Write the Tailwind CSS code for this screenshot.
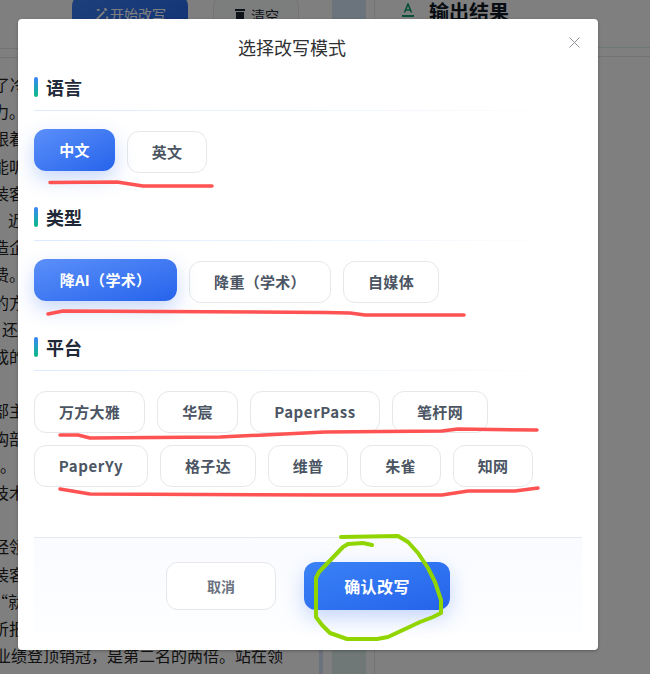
<!DOCTYPE html>
<html lang="zh-CN">
<head>
  <meta charset="UTF-8">
  <meta name="viewport" content="width=device-width, initial-scale=1.0">
  <title>选择改写模式</title>
  <script src="https://cdn.jsdelivr.net/npm/@tailwindcss/browser@4"></script>
</head>
<body class="font-['Noto_Sans_CJK_SC','Noto_Sans',sans-serif]">
  <div class="relative w-[650px] h-[674px] overflow-hidden bg-white flex">

    <!-- Page behind the dialog -->
    <div class="w-[319px] shrink-0 flex flex-col">
      <div class="h-[55px] border-b border-[#e5e7eb] flex items-start gap-[25px] pl-[72px] -mt-[6px] shrink-0">
        <div class="w-[116px] h-[50px] pt-[10px] rounded-[12px] bg-linear-to-br from-[#3b82f6] to-[#2563eb] text-white text-[14px] leading-[20px] flex items-start justify-center gap-[1px] shrink-0">
          <svg class="w-[15px] h-[15px] mt-[3px]" viewBox="0 0 16 16" fill="none" stroke="currentColor" stroke-width="2"><path d="M2 14 11 5M12 1v3M14 3h-3M3 3h3M14 10v3"/></svg>
          <span>开始改写</span>
        </div>
        <div class="w-[86px] h-[50px] pt-[10px] rounded-[12px] border border-[#e5e7eb] bg-[#f9fafb] text-[#1f2937] text-[14px] leading-[20px] flex items-start justify-center gap-[4px] shrink-0">
          <svg class="w-[14px] h-[15px] mt-[3px]" viewBox="0 0 14 15" fill="currentColor"><path d="M2 1h10v2H2zM3 4h8v11H3z"/></svg>
          <span>清空</span>
        </div>
      </div>
      <div class="mt-[8px] h-px bg-[#e5e7eb] shrink-0"></div>
      <div class="pt-[13px] text-[16px] leading-[27.2px] text-[#222] whitespace-nowrap">
        <p class="-ml-[6px]">了冷</p>
        <p class="-ml-[7px]">力。</p>
        <p class="-ml-[7px]">跟着</p>
        <p class="-ml-[7px]">能听</p>
        <p class="-ml-[7px]">装客</p>
        <p class="ml-[8px]">近</p>
        <p class="-ml-[7px]">造企</p>
        <p class="-ml-[7px]">费。</p>
        <p class="-ml-[7px]">的方</p>
        <p class="ml-[2px]">还</p>
        <p class="-ml-[7px]">成的</p>
        <p class="h-[27.2px]"></p>
        <p class="-ml-[7px]">部主</p>
        <p class="-ml-[7px]">构部</p>
        <p class="ml-0">。</p>
        <p class="-ml-[7px]">技术</p>
        <p class="h-[27.2px]"></p>
        <p class="-ml-[7px]">经领</p>
        <p class="-ml-[7px]">装客</p>
        <p class="-ml-[8px]">“就</p>
        <p class="-ml-[7px]">析报</p>
        <p class="-ml-[5px]">业绩登顶销冠，是第二名的两倍。站在领</p>
      </div>
    </div>
    <div class="w-[4px] h-full flex items-end shrink-0"><div class="w-full h-[60px] bg-[#d6e4fb]"></div></div>
    <div class="w-[9px] shrink-0"></div>
    <div class="w-[34px] shrink-0 h-full bg-linear-to-b from-[#d6e6f8] to-[#dff0ec]"></div>
    <div class="w-[9px] shrink-0 border-r border-[#e5e7eb]"></div>
    <div class="flex-1 flex flex-col">
      <div class="h-[48px] pl-[27px] flex items-start gap-[15px] border-b border-[#dff0ec] shrink-0">
        <svg class="w-[12px] h-[14px] mt-[3px] text-[#0f9f6e]" viewBox="0 0 12 14" fill="none" stroke="currentColor" stroke-width="1.6"><path d="M2.5 9.5 6 1l3.500 8.500M3.500 7h5"/><path d="M0 13h12" stroke-width="2"/></svg>
        <span class="text-[20px] leading-[24px] font-bold text-[#111827]">输出结果</span>
      </div>
      <div class="mt-[8px] h-px bg-[#e5e7eb]"></div>
    </div>

    <!-- Overlay -->
    <div class="absolute inset-0 bg-black/50"></div>

    <!-- Dialog -->
    <div class="absolute left-[18px] top-[19px] w-[580px] h-[631px] bg-white rounded-[4px] shadow-[0_1px_3px_rgba(0,0,0,0.3)] flex flex-col">
      <div class="h-[58px] shrink-0 flex justify-center pt-[16px] pr-[32px] text-[18px] leading-[24px] text-[#303133]">选择改写模式</div>
      <button class="absolute right-[18px] top-[18px] w-[11px] h-[11px]">
        <svg class="w-[11px] h-[11px] block" viewBox="0 0 11 11" fill="none" stroke="#909399" stroke-width="1"><path d="M0.500 0.500 10.500 10.500M10.500 0.500 0.500 10.500"/></svg>
      </button>

      <div class="px-[16px] flex flex-col">
        <!-- 语言 -->
        <div class="h-5 flex items-center gap-2">
          <span class="w-1 h-5 rounded-full bg-linear-to-b from-[#3b82f6] to-[#10b981]"></span>
          <h3 class="text-[18px] font-bold text-[#1f2937] leading-5">语言</h3>
        </div>
        <div class="mt-[13px] h-px w-full bg-linear-to-r from-[#dbeafe] to-transparent"></div>
        <div class="mt-5 flex gap-3 mb-[34px]">
          <button class="h-[42px] w-[81px] -translate-y-[2px] rounded-[12px] bg-linear-to-br from-[#5b8ff9] to-[#2563eb] text-white text-[15px] tracking-[0.3px] font-bold shadow-[0_8px_20px_rgba(37,99,235,0.25)]">中文</button>
          <button class="h-[42px] w-[80px] rounded-[12px] border border-[#e5e7eb] bg-white text-[#4b5563] text-[15px] tracking-[0.3px] font-bold">英文</button>
        </div>

        <!-- 类型 -->
        <div class="h-5 flex items-center gap-2">
          <span class="w-1 h-5 rounded-full bg-linear-to-b from-[#3b82f6] to-[#10b981]"></span>
          <h3 class="text-[18px] font-bold text-[#1f2937] leading-5">类型</h3>
        </div>
        <div class="mt-[13px] h-px w-full bg-linear-to-r from-[#dbeafe] to-transparent"></div>
        <div class="mt-5 flex gap-3 mb-[34px]">
          <button class="h-[42px] w-[143px] -translate-y-[2px] rounded-[12px] bg-linear-to-br from-[#5b8ff9] to-[#2563eb] text-white text-[15px] tracking-[0.3px] font-bold shadow-[0_8px_20px_rgba(37,99,235,0.25)]">降AI（学术）</button>
          <button class="h-[42px] w-[142px] rounded-[12px] border border-[#e5e7eb] bg-white text-[#4b5563] text-[15px] tracking-[0.3px] font-bold">降重（学术）</button>
          <button class="h-[42px] w-[96px] rounded-[12px] border border-[#e5e7eb] bg-white text-[#4b5563] text-[15px] tracking-[0.3px] font-bold">自媒体</button>
        </div>

        <!-- 平台 -->
        <div class="h-5 flex items-center gap-2">
          <span class="w-1 h-5 rounded-full bg-linear-to-b from-[#3b82f6] to-[#10b981]"></span>
          <h3 class="text-[18px] font-bold text-[#1f2937] leading-5">平台</h3>
        </div>
        <div class="mt-[13px] h-px w-full bg-linear-to-r from-[#dbeafe] to-transparent"></div>
        <div class="mt-5 mb-[50px] flex flex-col gap-3">
          <div class="flex gap-3">
            <button class="h-[42px] w-[111px] rounded-[12px] border border-[#e5e7eb] bg-white text-[#4b5563] text-[15px] tracking-[0.3px] font-bold">万方大雅</button>
            <button class="h-[42px] w-[81px] rounded-[12px] border border-[#e5e7eb] bg-white text-[#4b5563] text-[15px] tracking-[0.3px] font-bold">华宸</button>
            <button class="h-[42px] w-[130px] rounded-[12px] border border-[#e5e7eb] bg-white text-[#4b5563] text-[15px] tracking-[0.6px] font-bold">PaperPass</button>
            <button class="h-[42px] w-[96px] rounded-[12px] border border-[#e5e7eb] bg-white text-[#4b5563] text-[15px] tracking-[0.3px] font-bold">笔杆网</button>
          </div>
          <div class="flex gap-3">
            <button class="h-[42px] w-[114px] rounded-[12px] border border-[#e5e7eb] bg-white text-[#4b5563] text-[15px] tracking-[0.6px] font-bold">PaperYy</button>
            <button class="h-[42px] w-[96px] rounded-[12px] border border-[#e5e7eb] bg-white text-[#4b5563] text-[15px] tracking-[0.3px] font-bold">格子达</button>
            <button class="h-[42px] w-[80px] rounded-[12px] border border-[#e5e7eb] bg-white text-[#4b5563] text-[15px] tracking-[0.3px] font-bold">维普</button>
            <button class="h-[42px] w-[81px] rounded-[12px] border border-[#e5e7eb] bg-white text-[#4b5563] text-[15px] tracking-[0.3px] font-bold">朱雀</button>
            <button class="h-[42px] w-[80px] rounded-[12px] border border-[#e5e7eb] bg-white text-[#4b5563] text-[15px] tracking-[0.3px] font-bold">知网</button>
          </div>
        </div>

        <!-- Footer -->
        <div class="h-[96px] border-t border-[#e5eaf3] bg-linear-to-b from-[#f9fbff] to-[#fdfeff] flex justify-center items-start pt-6 gap-7">
          <button class="w-[110px] h-12 rounded-[12px] border border-[#e5e7eb] bg-white text-[#6b7280] text-[14px] font-bold">取消</button>
          <button class="w-[146px] h-12 rounded-[12px] bg-linear-to-br from-[#3b82f6] to-[#2563eb] text-white text-[16px] tracking-[0.4px] font-bold shadow-[0_8px_20px_rgba(37,99,235,0.25)]">确认改写</button>
        </div>
      </div>
    </div>

    <!-- Hand-drawn marks on the screenshot -->
    <svg class="absolute inset-0 w-[650px] h-[674px] pointer-events-none" viewBox="0 0 650 674" fill="none" stroke-linecap="round" stroke-linejoin="round">
      <g stroke="#ff5252" stroke-width="3.500">
        <path d="M50 182.500 117 182 143 186 212 186"/>
        <path d="M48 314 63 311 325 312.500 350 313 365 315 464 315"/>
        <path d="M60 435 78 435 90 438 220 437 325 432 442 431 458 429 537 430"/>
        <path d="M60 489 90 494 325 495 442 495 468 491 515 491 538 488"/>
      </g>
      <path stroke="#90d400" stroke-width="4" d="M341 537 398 536 408 542 418 553 428 568 435 582 441 600 441 613 433 617 420 622 388 637 377 639 347 639 330 633 322 625 316 617 316 578 319 572 343 547 348 544 363 543 372 545"/>
    </svg>
  </div>
</body>
</html>
